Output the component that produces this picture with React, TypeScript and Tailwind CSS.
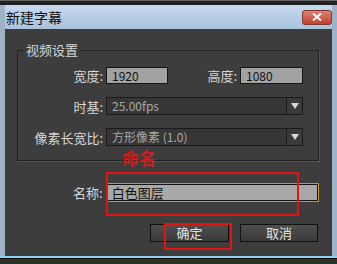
const cjk = { fontFamily: '"Noto Sans CJK SC", "Noto Sans", sans-serif' }

function Dropdown({ value }: { value: string }) {
  return (
    <div className="flex h-[18px] w-[197px] border border-[#1a1a1a] bg-[#363636]">
      <div className="flex-1 pl-[5px] text-[12px] leading-[16px] text-[#a9a9a9]">{value}</div>
      <div className="flex w-[16px] items-center justify-center border-l border-[#1c1c1c] bg-[#3a3a3a]">
        <svg width="8" height="6" viewBox="0 0 8 6">
          <path d="M0 0h8L4 6z" fill="#d8d8d8" />
        </svg>
      </div>
    </div>
  )
}

export default function App() {
  return (
    <div className="relative flex h-[264px] w-[337px] flex-col bg-[#2f2f2a] text-[13px] leading-[17px]" style={cjk}>
      {/* top strip */}
      <div className="h-[5px] bg-[#222] border-t border-[#666]" />

      <div className="flex flex-col border-x-[5px] border-[#9fb3c8]">
        {/* title bar */}
        <div className="flex h-[24px] items-center justify-between bg-gradient-to-b from-[#c6daef] to-[#a9c1dd] pl-[1px]">
          <span className="text-[14px] leading-[16px] text-[#111]">新建字幕</span>
          <div className="flex h-[15px] w-[30px] items-center justify-center rounded-[3px] border border-[#7a3a30] bg-gradient-to-b from-[#e08070] to-[#c0402c]">
            <svg width="10" height="8" viewBox="0 0 10 8">
              <path d="M1 0.5l8 7M9 0.5l-8 7" stroke="#fff" strokeWidth="2" />
            </svg>
          </div>
        </div>

        {/* body */}
        <div className="flex h-[227px] flex-col bg-[#3d3d3d] pl-[12px] pr-[13px]">
          <fieldset className="mt-[13px] border border-[#222] pb-[14px] pr-[15px] pt-[9px] shadow-[1px_1px_0_#555]">
            <legend className="ml-[6px] px-[2px] text-[13px] leading-[16px] text-[#d6d6d6]">视频设置</legend>
            <div className="flex flex-col gap-[13px]">
              <div className="flex h-[17px] items-center">
                <span className="w-[85px] text-right text-[#d6d6d6]">宽度:</span>
                <div className="ml-[3px] h-[17px] w-[62px] border border-[#151515] bg-[#a2a2a2] pl-[5px] text-[12px] leading-[15px] text-[#111]">1920</div>
                <span className="w-[69px] text-right text-[#d6d6d6]">高度:</span>
                <div className="ml-[3px] h-[17px] w-[63px] border border-[#151515] bg-[#a2a2a2] pl-[5px] text-[12px] leading-[15px] text-[#111]">1080</div>
              </div>
              <div className="flex h-[18px] items-center">
                <span className="w-[85px] text-right text-[#d6d6d6]">时基:</span>
                <div className="ml-[3px]"><Dropdown value="25.00fps" /></div>
              </div>
              <div className="flex h-[18px] items-center">
                <span className="w-[85px] text-right text-[#d6d6d6]">像素长宽比:</span>
                <div className="ml-[3px]"><Dropdown value="方形像素 (1.0)" /></div>
              </div>
            </div>
          </fieldset>

          <div className="mt-[22px] flex h-[19px] items-center">
            <span className="w-[86px] text-right text-[#d6d6d6]">名称:</span>
            <div className="ml-[3px] h-[19px] w-[214px] border border-[#c8963a] bg-[#a8a8a8]">
              <div className="h-full border border-[#151515] pl-[4px] text-[13px] leading-[15px] text-[#111]">白色图层</div>
            </div>
          </div>

          <div className="mt-[22px] flex justify-end gap-[11px] pr-[1px]">
            <button className="h-[18px] w-[79px] border border-[#111] bg-gradient-to-b from-[#4e4e4e] to-[#3a3a3a] text-[13px] leading-[14px] text-[#e2e2e2]">确定</button>
            <button className="h-[18px] w-[78px] border border-[#111] bg-gradient-to-b from-[#4e4e4e] to-[#3a3a3a] text-[13px] leading-[14px] text-[#e2e2e2]">取消</button>
          </div>
        </div>
      </div>

      {/* bottom frame */}
      <div className="h-[2px] bg-[#8fd0ee]" />
      <div className="h-[1px] bg-[#0a0a0a]" />

      {/* annotations */}
      <span className="absolute left-[122px] top-[149px] text-[17px] font-bold leading-[18px] text-[#d41a1a]">命名</span>
      <div className="absolute left-[106px] top-[172px] h-[44px] w-[193px] border-2 border-[#e01414]" />
      <div className="absolute left-[164px] top-[223px] h-[27px] w-[68px] border-2 border-[#e01414]" />
    </div>
  )
}
